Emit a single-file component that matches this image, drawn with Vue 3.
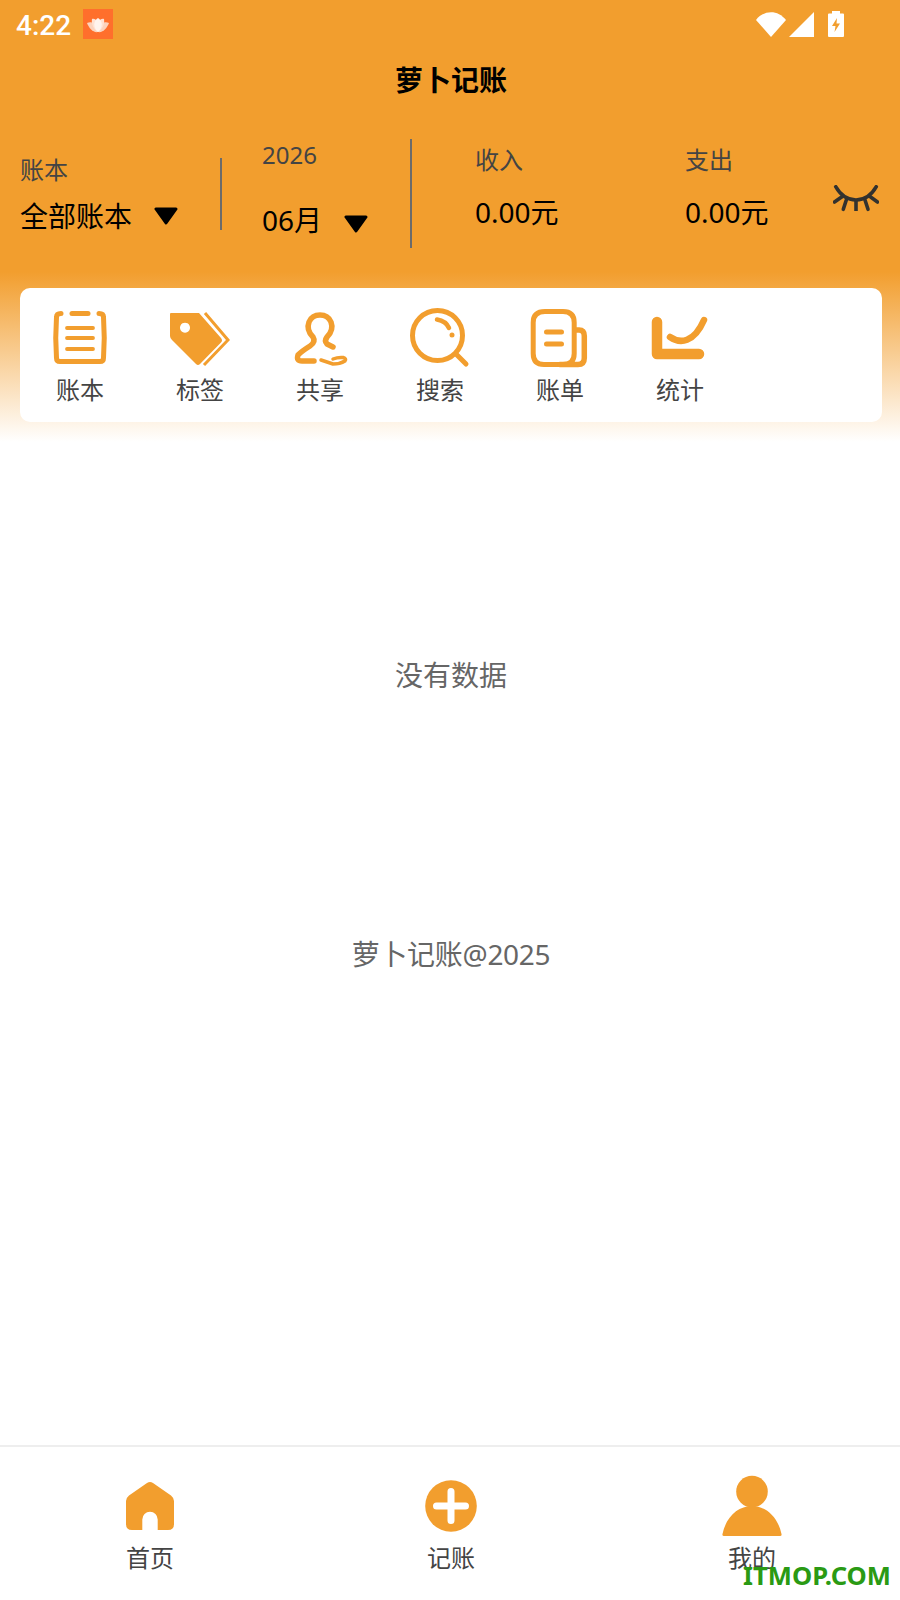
<template>
  <div class="page">
    <div class="hero">
      <div class="status-bar">
        <span class="clock">4:22</span>
        <svg class="app-badge" viewBox="0 0 30 30">
          <rect width="30" height="30" fill="#ff6f2c" />
          <path d="M4 14C8 12 12 13 15 23C10 24 6 19 4 14Z" fill="#fcd3bd" />
          <path d="M26 14C22 12 18 13 15 23C20 24 24 19 26 14Z" fill="#fcd3bd" />
          <path d="M9 10C13 9 16 13 15 23C11 21 8 15 9 10Z" fill="#ffe2d3" />
          <path d="M21 10C17 9 14 13 15 23C19 21 22 15 21 10Z" fill="#ffe2d3" />
          <path d="M15 9C20 12 20 19 15 23C10 19 10 12 15 9Z" fill="#fff4ee" />
        </svg>
        <div class="status-icons">
          <svg width="30" height="25" viewBox="0 0 30 25">
            <path d="M0 8C8-2.500 22-2.500 30 8L15 25Z" fill="#fff" />
          </svg>
          <svg width="25" height="25" viewBox="0 0 25 25">
            <path d="M25 0V25H0Z" fill="#fff" />
          </svg>
          <svg width="16" height="26" viewBox="0 0 16 26">
            <path d="M4 0H12V2.500H15Q16 2.500 16 3.500V25Q16 26 15 26H1Q0 26 0 25V3.500Q0 2.500 1 2.500H4Z" fill="#fff" />
            <path d="M9 7L4 15H7.500L6.500 21L12 12.500H8.500Z" fill="#f29e2e" />
          </svg>
        </div>
      </div>
      <div class="title">萝卜记账</div>

      <div class="summary">
        <div class="book">
          <div class="label">账本</div>
          <div class="value">全部账本<svg class="caret" viewBox="0 0 24 18"><path d="M2 2H22L12 16Z" fill="#000" stroke="#000" stroke-width="3" stroke-linejoin="round" /></svg></div>
        </div>
        <div class="rule short"></div>
        <div class="month">
          <div class="label">2026</div>
          <div class="value">06月<svg class="caret" viewBox="0 0 24 18"><path d="M2 2H22L12 16Z" fill="#000" stroke="#000" stroke-width="3" stroke-linejoin="round" /></svg></div>
        </div>
        <div class="rule tall"></div>
        <div class="money income">
          <div class="label">收入</div>
          <div class="value">0.00元</div>
        </div>
        <div class="money expense">
          <div class="label">支出</div>
          <div class="value">0.00元</div>
        </div>
        <svg class="eye" viewBox="0 0 46 28" fill="none" stroke="#33322f" stroke-width="3.600" stroke-linecap="round">
          <path d="M2.700 1.700C8 11 16 15 23 15S38 11 43.300 1.700" />
          <path d="M1.500 17L8.600 12" />
          <path d="M10.300 24.300L13.300 15" />
          <path d="M23 26V15" stroke-linecap="butt" />
          <path d="M35 24.300L32 15" />
          <path d="M44.500 17L37.600 12" />
        </svg>
      </div>

      <div class="tools">
        <div v-for="tool in tools" :key="tool.name" class="tool">
          <svg class="tool-icon" viewBox="0 0 60 60" v-html="tool.svg"></svg>
          <span>{{ tool.name }}</span>
        </div>
      </div>
    </div>

    <main class="content">
      <div class="empty">没有数据</div>
      <div class="copyright">萝卜记账@2025</div>
    </main>

    <nav class="tabbar">
      <div class="tab">
        <svg class="tab-icon" viewBox="0 0 60 60">
          <path fill="#f29e2e" d="M30 5Q31.500 5 33 6L51 18.500Q54 21 54 24V47Q54 53 48 53H37.700V42.500A7.700 7.700 0 0 0 22.300 42.500V53H12Q6 53 6 47V24Q6 21 9 18.500L27 6Q28.500 5 30 5Z" />
        </svg>
        <span>首页</span>
      </div>
      <div class="tab plus">
        <svg class="tab-icon" viewBox="0 0 60 60">
          <circle cx="30" cy="29" r="25.800" fill="#f29e2e" />
          <path d="M30 14.500V43.500M15.500 29H44.500" stroke="#fff" stroke-width="7" stroke-linecap="round" />
        </svg>
        <span>记账</span>
      </div>
      <div class="tab mine">
        <svg class="tab-icon" viewBox="0 0 60 60">
          <circle cx="30" cy="14.600" r="15.800" fill="#f29e2e" />
          <path d="M0.500 57C4 40 16 29 30 29S56 40 59.500 57Q60 59 58 59H2Q0 59 0.500 57Z" fill="#f29e2e" />
        </svg>
        <span>我的</span>
      </div>
      <div class="watermark">ITMOP.COM</div>
    </nav>
  </div>
</template>

<script setup>
const tools = [
  {
    name: '账本',
    svg: `<g fill="none" stroke="#f29e2e" stroke-linecap="round">
      <path d="M11 5.500Q6.500 5.500 6.500 9Q5 30 6.500 50Q6.500 53.500 10 53.500H50Q53.500 53.500 53.500 50Q55 30 53.500 9Q53.500 5.500 49 5.500" stroke-width="5" />
      <path d="M22 5.500H38" stroke-width="5" />
      <path d="M17 20H43M17 30H43M17 41H43" stroke-width="3.800" />
    </g>`
  },
  {
    name: '标签',
    svg: `<path fill="#f29e2e" fill-rule="evenodd" d="M1 5H29L51 30Q53 32.500 51 34.500L30 56Q28 58 26 56L2 32Q0 30 0 28V6Q0 5 1 5ZM15 14.700A5 5 0 1 0 15.010 14.700Z" />
      <path d="M35 5L58 32L34 57" fill="none" stroke="#f29e2e" stroke-width="3" />`
  },
  {
    name: '共享',
    svg: `<g fill="none" stroke="#f29e2e" stroke-linecap="round" stroke-linejoin="round">
      <path d="M24 53H12Q6 53 8 47Q12 43 20 38Q26 34 23 29Q16 22 19 14Q22 7 30 7Q38 7 41 14Q44 22 37 29Q34 33 37 36L43 39" stroke-width="5.500" />
      <path d="M31 52L43 56Q50 56 55 53Q57 51 53 49.500Q48 49 43 51" stroke-width="3.500" />
    </g>`
  },
  {
    name: '搜索',
    svg: `<g fill="none" stroke="#f29e2e" stroke-linecap="round">
      <circle cx="27.500" cy="27.500" r="25" stroke-width="5" />
      <path d="M46 46L56 56" stroke-width="5" />
      <path d="M27 11.500Q36 13 39 20" stroke-width="4.500" />
    </g>
    <circle cx="42" cy="27" r="2.500" fill="#f29e2e" />`
  },
  {
    name: '账单',
    svg: `<g fill="none" stroke="#f29e2e" stroke-linecap="round">
      <path d="M15 3.500H33Q44.200 3.500 44.200 14.500V45.500Q44.200 56.500 33 56.500H14Q3.200 56.500 3.200 45.500V14.500Q3.200 3.500 15 3.500Z" stroke-width="5" />
      <path d="M46 22H49Q54.300 22 54.300 28V50Q54.300 56.500 48 56.500H30" stroke-width="5.500" />
      <path d="M16.500 24H31.500M16.500 36H31.500" stroke-width="5" />
    </g>`
  },
  {
    name: '统计',
    svg: `<g fill="none" stroke="#f29e2e" stroke-linecap="round" stroke-linejoin="round">
      <path d="M7 14V46H49" stroke-width="10.500" />
      <path d="M20 29C30 36 44 35 54 12" stroke-width="6.500" />
    </g>`
  }
]
</script>

<style>
html, body {
  margin: 0;
  background: #fff;
}
</style>

<style scoped>
.page {
  width: 900px;
  height: 1600px;
  display: flex;
  flex-direction: column;
  overflow: hidden;
  font-family: "Noto Sans", "Noto Sans CJK SC", sans-serif;
  color: #333;
}

.hero {
  height: 450px;
  flex: none;
  box-sizing: border-box;
  background: linear-gradient(#f29e2e 0, #f29e2e 272px, #fff 442px);
}

.status-bar {
  height: 50px;
  display: flex;
  align-items: center;
  padding: 0 16px;
}

.clock {
  font-family: Roboto, sans-serif;
  font-weight: 500;
  font-size: 28px;
  color: #fff;
}

.app-badge {
  width: 30px;
  height: 30px;
  margin-left: 12px;
  margin-bottom: 2px;
}

.status-icons {
  margin-left: auto;
  margin-right: 40px;
  margin-bottom: 2px;
  display: flex;
  align-items: center;
  gap: 3px;
}

.status-icons svg:last-child {
  margin-left: 11px;
}

.title {
  height: 62px;
  line-height: 60px;
  padding-left: 2px;
  text-align: center;
  font-size: 28px;
  font-weight: 700;
  color: #000;
}

.summary {
  height: 176px;
  display: flex;
  align-items: flex-start;
  padding-left: 20px;
}

.label {
  font-size: 24px;
  line-height: 34px;
  color: #444;
}

.value {
  font-size: 28px;
  line-height: 40px;
  color: #000;
  display: flex;
  align-items: center;
}

.book {
  width: 200px;
  flex: none;
  padding-top: 41px;
}

.book .value {
  margin-top: 9px;
}

.month {
  width: 148px;
  flex: none;
  margin-left: 40px;
  padding-top: 26px;
}

.month .value {
  margin-top: 28px;
}

.caret {
  width: 24px;
  height: 18px;
  flex: none;
  margin-left: 22px;
}

.month .caret {
  margin-top: 8px;
}

.rule {
  width: 2px;
  flex: none;
  background: #6b6b6b;
}

.rule.short {
  height: 72px;
  margin-top: 46px;
}

.rule.tall {
  height: 109px;
  margin-top: 27px;
}

.money {
  flex: none;
  width: 210px;
  padding-top: 31px;
}

.money .value {
  margin-top: 15px;
}

.income {
  margin-left: 63px;
}

.expense {
  width: 148px;
}

.eye {
  width: 46px;
  height: 28px;
  flex: none;
  margin-top: 73px;
}

.tools {
  margin: 0 18px 0 20px;
  height: 134px;
  box-sizing: border-box;
  background: #fff;
  border-radius: 10px;
  display: flex;
}

.tool {
  width: 120px;
  flex: none;
  display: flex;
  flex-direction: column;
  align-items: center;
  padding-top: 20px;
  font-size: 24px;
  color: #444;
}

.tool span {
  line-height: 34px;
  margin-top: 5px;
}

.tool-icon {
  width: 60px;
  height: 60px;
}

.content {
  flex: 1;
  color: #666;
  font-size: 28px;
  text-align: center;
  padding-left: 2px;
}

.empty {
  margin-top: 205px;
  line-height: 40px;
}

.copyright {
  margin-top: 239px;
  line-height: 40px;
  letter-spacing: -0.3px;
}

.tabbar {
  height: 155px;
  flex: none;
  box-sizing: border-box;
  border-top: 2px solid #eee;
  display: flex;
  position: relative;
}

.tab {
  width: 300px;
  flex: none;
  box-sizing: border-box;
  display: flex;
  flex-direction: column;
  align-items: center;
  padding-top: 30px;
  font-size: 24px;
  color: #444;
}

.tab.plus {
  padding-left: 2px;
}

.tab.mine {
  padding-left: 4px;
}

.tab span {
  line-height: 34px;
  margin-top: 4px;
}

.tab-icon {
  width: 60px;
  height: 60px;
  overflow: visible;
}

.watermark {
  position: absolute;
  right: 9px;
  bottom: 9px;
  font-family: "Noto Sans", sans-serif;
  font-weight: 700;
  font-size: 25.6px;
  line-height: 30px;
  color: #2a9a14;
}
</style>
